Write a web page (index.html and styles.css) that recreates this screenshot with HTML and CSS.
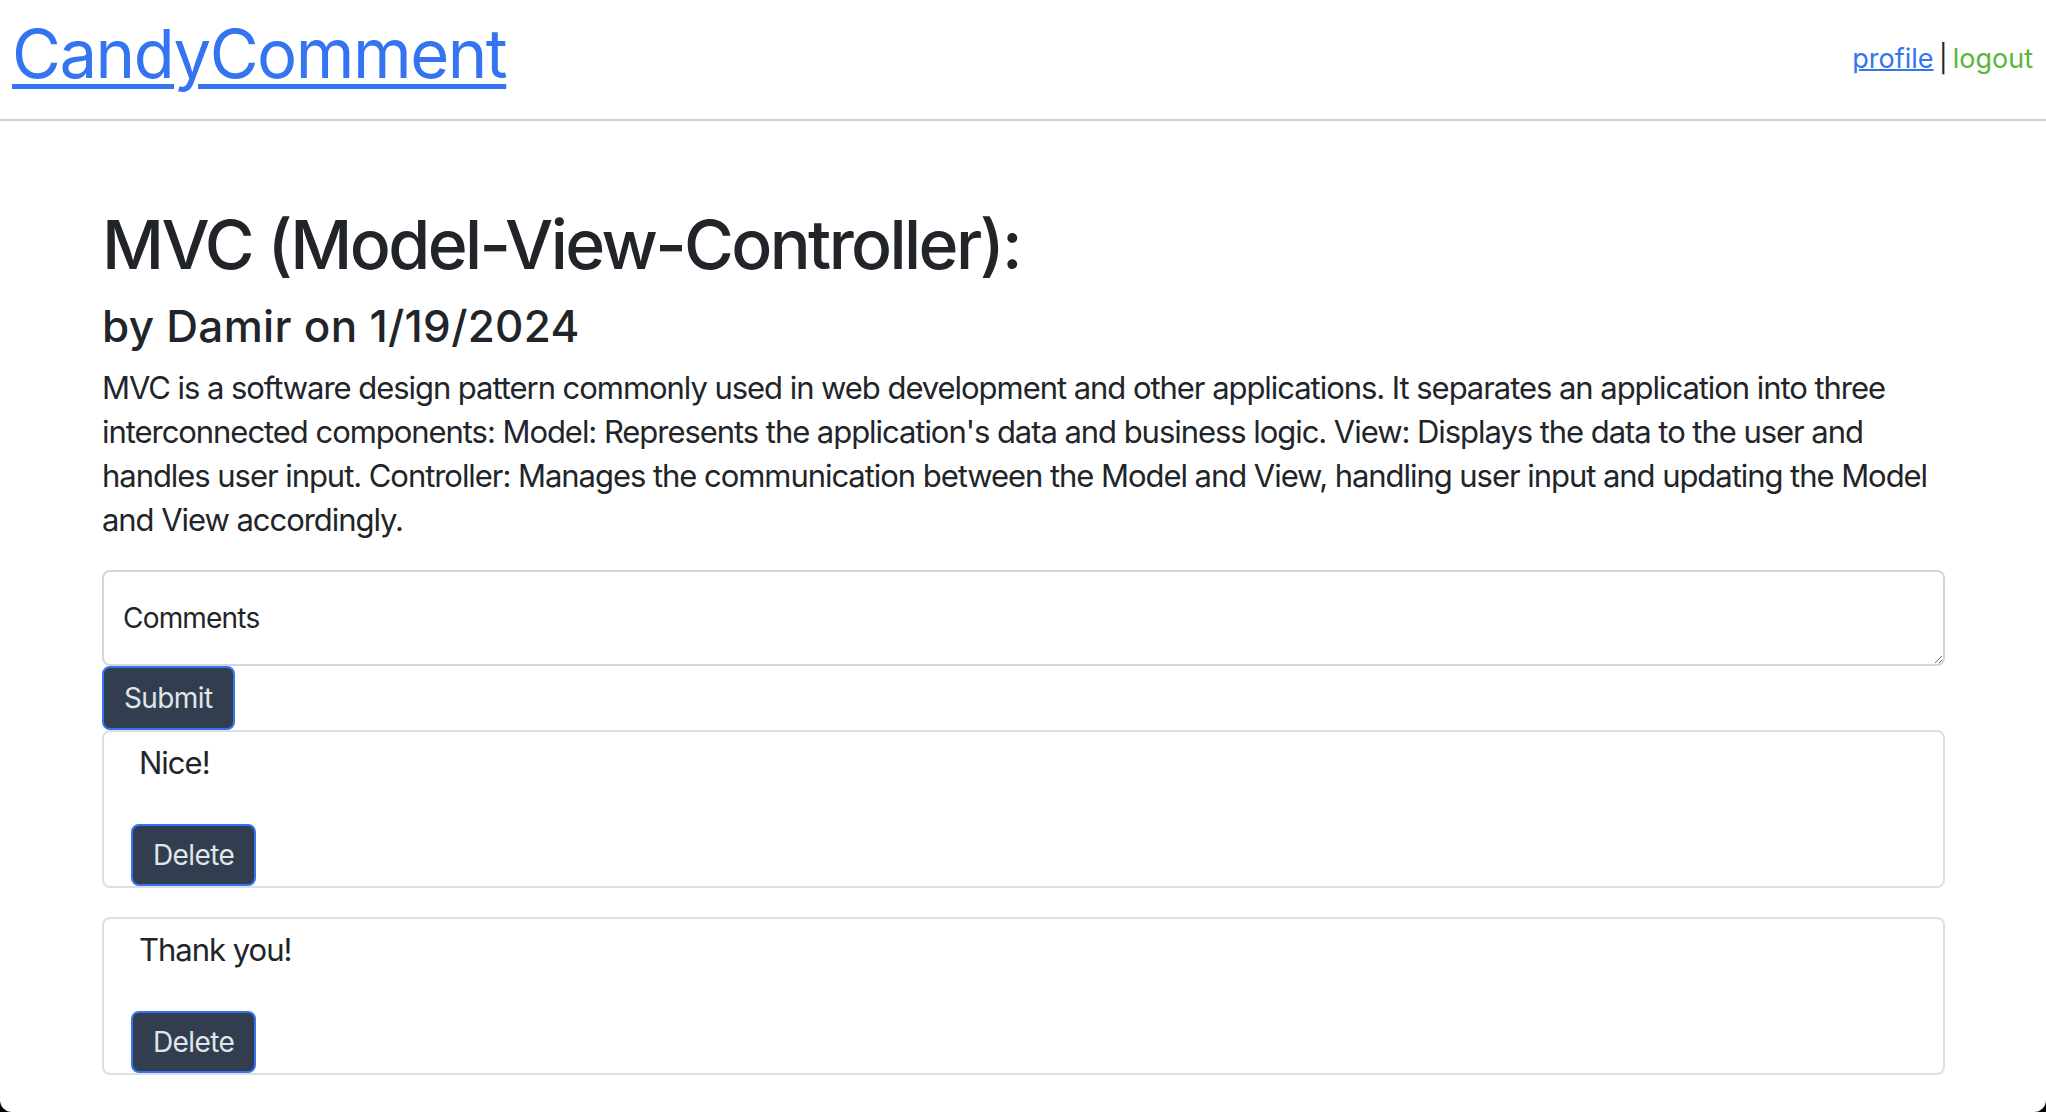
FILE: index.html
```html
<!DOCTYPE html>
<html lang="en">
<head>
<meta charset="utf-8">
<title>CandyComment</title>
<link rel="stylesheet" href="styles.css">
</head>
<body>
<div class="page">
  <header class="topbar">
    <a class="brand" href="#">CandyComment</a>
    <nav class="usernav"><a class="nav-profile" href="#">profile</a> <span class="nav-sep">|</span> <span class="nav-logout">logout</span></nav>
  </header>
  <main class="content">
    <h1 class="post-title">MVC (Model-View-Controller):</h1>
    <h2 class="post-meta">by Damir on 1/19/2024</h2>
    <p class="post-body">MVC is a software design pattern commonly used in web development and other applications. It separates an application into three interconnected components: Model: Represents the application's data and business logic. View: Displays the data to the user and handles user input. Controller: Manages the communication between the Model and View, handling user input and updating the Model and View accordingly.</p>
    <form class="comment-form">
      <textarea class="comment-input" placeholder="Comments"></textarea>
      <button type="button" class="btn">Submit</button>
    </form>
    <div class="comment">
      <p class="comment-text">Nice!</p>
      <button type="button" class="btn btn-delete">Delete</button>
    </div>
    <div class="comment">
      <p class="comment-text">Thank you!</p>
      <button type="button" class="btn btn-delete">Delete</button>
    </div>
  </main>
</div>
</body>
</html>
```
FILE: styles.css
```css
html {
  background: #000;
  margin: 0;
}
body {
  margin: 0;
  font-family: Inter, "Noto Sans", sans-serif;
  color: #212529;
}
.page {
  background: #fff;
  min-height: 1112px;
  border-radius: 0 0 12px 12px;
  overflow: hidden;
}
.topbar {
  display: flex;
  justify-content: space-between;
  align-items: flex-start;
  height: 119px;
  padding: 0 13px 0 12px;
  border-bottom: 2px solid #cfcfcf;
}
.brand {
  margin-top: 20px;
  font-size: 67px;
  line-height: 67px;
  letter-spacing: -1.5px;
  color: #3574f0;
  text-decoration: underline;
  text-decoration-thickness: 5px;
  text-underline-offset: 6px;
}
.usernav {
  margin-top: 45px;
  font-size: 27px;
  line-height: 27px;
  white-space: nowrap;
  word-spacing: -2.5px;
}
.nav-profile {
  color: #3574f0;
  text-decoration: underline;
  text-decoration-thickness: 2px;
}
.nav-sep { color: #212529; }
.nav-logout { color: #5bb53b; }
.content {
  padding: 0 101px 0 102px;
}
.post-title {
  margin: 89px 0 0;
  font-size: 68px;
  line-height: 68px;
  font-weight: 500;
  letter-spacing: -2.6px;
}
.post-meta {
  margin: 26px 0 0;
  font-size: 44px;
  line-height: 44px;
  font-weight: 500;
  letter-spacing: 0.3px;
}
.post-body {
  margin: 18px 0 28px;
  font-size: 31px;
  line-height: 44px;
  letter-spacing: -1.05px;
}
.comment-form {
  margin: 0;
}
.comment-input {
  display: block;
  width: 100%;
  height: 96px;
  box-sizing: border-box;
  margin: 0;
  padding: 25px 19px 10px;
  border: 2px solid #d3d7dc;
  border-radius: 8px;
  font-family: Inter, "Noto Sans", sans-serif;
  font-size: 28px;
  line-height: 42px;
  letter-spacing: -0.8px;
  color: #212529;
}
.comment-input::placeholder {
  color: #212529;
  opacity: 1;
}
.btn {
  display: block;
  height: 64px;
  margin: 0;
  padding: 0 20px;
  box-sizing: border-box;
  border: 2px solid #3574f0;
  border-radius: 8px;
  background: #323e4f;
  color: #dfe6ea;
  font-family: Inter, "Noto Sans", sans-serif;
  font-size: 28px;
  letter-spacing: -0.6px;
}
.btn-delete {
  height: 62px;
}
.comment {
  border: 2px solid #dfdfdf;
  border-radius: 8px;
  padding: 15px 0 0 27px;
  margin-bottom: 29px;
}
.comment-text {
  margin: 0 0 45px 8px;
  font-size: 31px;
  line-height: 32px;
  letter-spacing: -1px;
}
```
